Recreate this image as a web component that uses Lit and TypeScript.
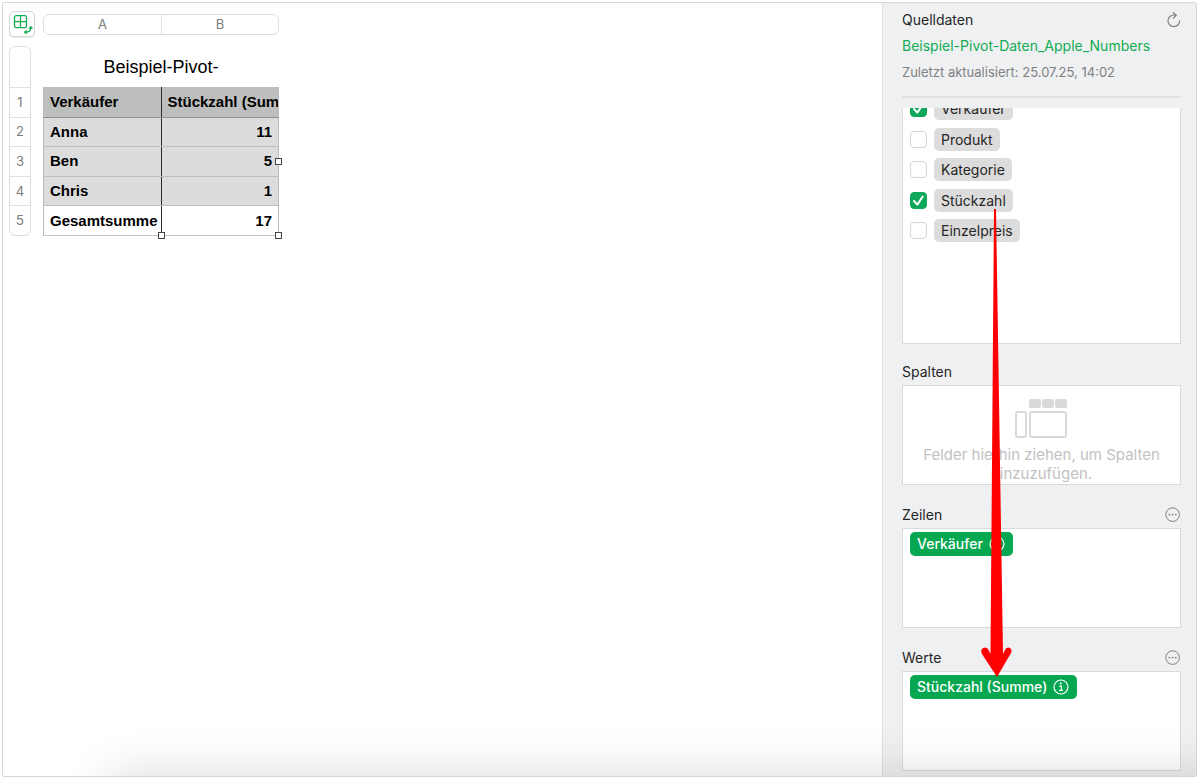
import { LitElement, html, css, svg, nothing } from "lit";
import { customElement, property, state } from "lit/decorators.js";

const infoIcon = html`<svg class="info" viewBox="0 0 16 16" width="16" height="16" aria-hidden="true">
  <circle cx="8" cy="8" r="7" fill="none" stroke="currentColor" stroke-width="1.2" />
  <circle cx="7.8" cy="4.6" r="1" fill="currentColor" />
  <path d="M6.3 7.2H8.3V11.2M6.1 11.4H10" fill="none" stroke="currentColor" stroke-width="1.2" />
</svg>`;

/** Spreadsheet area: headers, pivot table and selection handles. */
@customElement("pivot-sheet")
export class PivotSheet extends LitElement {
  static styles = css`
    :host {
      display: block;
      min-width: 0;
      font-family: "Liberation Sans", Arial, sans-serif;
    }
    .sheet {
      display: grid;
      grid-template-columns: 34px 236px;
      padding: 8px 0 0 6px;
    }
    .corner {
      width: 26px;
      height: 26px;
      padding: 0;
      border: 1px solid #d6d6d6;
      border-radius: 5px;
      background: #fff;
      box-shadow: 0 1px 1px rgba(0, 0, 0, 0.08);
    }
    .corner svg {
      display: block;
    }
    .cols {
      display: grid;
      grid-template-columns: 1fr 1fr;
      box-sizing: border-box;
      height: 21px;
      margin-top: 3px;
      border: 1px solid #dcdcdc;
      border-radius: 6px;
    }
    .cols,
    .rows {
      font: 13px/19px Inter, sans-serif;
      color: #7c7c7c;
      text-align: center;
    }
    .cols span + span {
      border-left: 1px solid #e2e2e2;
    }
    .rows {
      display: grid;
      grid-template-rows: 40px repeat(5, 1fr);
      box-sizing: border-box;
      width: 22px;
      height: 190px;
      margin-top: 9px;
      border: 1px solid #dcdcdc;
      border-radius: 6px;
    }
    .rows span {
      display: grid;
      place-items: center;
    }
    .rows span + span {
      border-top: 1px solid #e2e2e2;
    }
    .body {
      position: relative;
      margin-top: 9px;
    }
    table {
      width: 100%;
      height: 149px;
      table-layout: fixed;
      border-collapse: collapse;
      font-size: 15px;
      line-height: 20px;
      color: #000;
    }
    caption {
      box-sizing: border-box;
      height: 41px;
      padding-top: 11px;
      font-size: 18px;
    }
    tr {
      height: 20%;
    }
    th,
    td {
      padding: 4px 6px;
      overflow: hidden;
      white-space: nowrap;
      font-weight: bold;
      text-align: left;
      border: 1px solid #bebebe;
      background: #dcdcdc;
    }
    td {
      text-align: right;
    }
    .top th {
      background: #bdbfbe;
      border-color: #bdbfbe;
      border-bottom-color: #8f9190;
    }
    .total th,
    .total td {
      background: #fff;
      border-top-color: #7e7e7e;
      border-bottom-color: #c6c6c6;
    }
    tr > :first-child {
      border-right: 1px solid #2b2b2b;
    }
    tr > :last-child {
      border-left: 1px solid #2b2b2b;
    }
    .handle {
      position: absolute;
      width: 7px;
      height: 7px;
      box-sizing: border-box;
      border: 1px solid #444;
      background: #fff;
    }
    .bottom {
      bottom: -3px;
    }
    .center {
      left: calc(50% - 3px);
    }
    .right {
      right: -3px;
    }
    .middle {
      bottom: 71px;
    }
  `;

  @property({ attribute: false }) data: [string, number][] = [
    ["Anna", 11],
    ["Ben", 5],
    ["Chris", 1],
  ];

  render() {
    const total = this.data.reduce((sum, [, n]) => sum + n, 0);
    return html`<div class="sheet">
      <button class="corner" aria-label="Pivot-Tabelle">
        <svg width="24" height="24" viewBox="0 0 24 24" fill="none" stroke="#12ac53" stroke-width="1.3">
          <rect x="4.5" y="3.700" width="12" height="12" rx="1.8" />
          <path d="M10.500 3.700V15.700M4.500 9.700H16.500" />
          <path d="M20.700 16Q20.700 20 15.500 20.200" />
          <path d="M18.700 16.400L20.700 14L22.700 16.500ZM16.400 18.200L13.900 20.200L16.500 22.100Z" fill="#12ac53" stroke-width=".5" />
        </svg>
      </button>
      <div class="cols"><span>A</span><span>B</span></div>
      <div class="rows">
        <span></span>${[1, 2, 3, 4, 5].map((n) => html`<span>${n}</span>`)}
      </div>
      <div class="body">
        <table>
          <caption>Beispiel-Pivot-</caption>
          <tbody>
            <tr class="top"><th scope="col">Verkäufer</th><th scope="col">Stückzahl (Summe)</th></tr>
            ${this.data.map(([name, n]) => html`<tr><th scope="row">${name}</th><td>${n}</td></tr>`)}
            <tr class="total"><th scope="row">Gesamtsumme</th><td>${total}</td></tr>
          </tbody>
        </table>
        <i class="handle bottom center"></i>
        <i class="handle bottom right"></i>
        <i class="handle middle right"></i>
      </div>
    </div>`;
  }
}

/** Inspector with the field list and the three drop areas. */
@customElement("pivot-inspector")
export class PivotInspector extends LitElement {
  static styles = css`
    :host {
      display: block;
      box-sizing: border-box;
      padding: 7px 15px 5px 19px;
      border-left: 1px solid #e0e0e1;
      background: #eff0f2;
      font: 14px/20px Inter, sans-serif;
      color: #262626;
    }
    .head {
      display: flex;
      justify-content: space-between;
      align-items: center;
    }
    h2 {
      margin: 0;
      font: inherit;
    }
    button {
      display: block;
      padding: 0;
      border: 0;
      background: none;
      color: #808080;
    }
    button svg,
    .info {
      display: block;
    }
    .source {
      display: block;
      margin-top: 6px;
      color: #12ac53;
      text-decoration: none;
    }
    .updated {
      margin: 6px 0 0;
      padding-bottom: 14px;
      border-bottom: 2px solid #dfe0e2;
      font-size: 13px;
      color: #808082;
    }
    .box {
      box-sizing: border-box;
      height: 100px;
      border: 1px solid #d9dadb;
      background: #fff;
      overflow: hidden;
    }
    .fields {
      height: 236px;
      margin-top: 10px;
      border-top: 0;
    }
    ul {
      display: flex;
      flex-direction: column;
      justify-content: space-between;
      height: 145px;
      margin: -11px 0 0;
      padding: 0 0 0 7px;
      list-style: none;
    }
    label {
      display: flex;
      align-items: center;
      gap: 7px;
      width: max-content;
    }
    .check {
      display: grid;
      color: #fff;
    }
    .check > * {
      grid-area: 1 / 1;
    }
    input {
      appearance: none;
      width: 17px;
      height: 17px;
      margin: 0;
      box-sizing: border-box;
      border: 1px solid #d4d4d4;
      border-radius: 4px;
      background: #fff;
    }
    input:checked {
      border-color: #0fa75a;
      background: #0fa75a;
    }
    .check svg {
      pointer-events: none;
    }
    .chip {
      padding: 0 7px;
      border-radius: 5px;
      background: #dcdcdc;
      line-height: 23px;
    }
    .areas {
      display: grid;
      gap: 20px;
      margin-top: 18px;
    }
    .area .head {
      height: 20px;
      margin-bottom: 3px;
    }
    .empty {
      padding-top: 13px;
      text-align: center;
      font-size: 15px;
      line-height: 19px;
      color: #c2c2c2;
    }
    .empty svg {
      display: block;
      margin: 0 auto 6px;
    }
    .empty p {
      margin: 0 10px;
    }
    .pill {
      display: inline-flex;
      align-items: center;
      gap: 6px;
      height: 24px;
      margin: 3px 7px;
      padding: 0 8px 0 7px;
      border-radius: 5px;
      background: #05a850;
      color: #fff;
      font-weight: 500;
    }
  `;

  @state() private fields = [
    { name: "Verkäufer", on: true },
    { name: "Produkt", on: false },
    { name: "Kategorie", on: false },
    { name: "Stückzahl", on: true },
    { name: "Einzelpreis", on: false },
  ];

  private area(title: string, value?: string) {
    return html`<section class="area">
      <div class="head">
        <h2>${title}</h2>
        ${value
          ? html`<button aria-label="Optionen">
              <svg width="16" height="16" viewBox="0 0 16 16">
                <circle cx="7.600" cy="7.600" r="6.800" fill="none" stroke="currentColor" />
                ${[4.4, 7.6, 10.8].map((x) => svg`<circle cx=${x} cy="7.600" r=".9" fill="currentColor" />`)}
              </svg>
            </button>`
          : nothing}
      </div>
      <div class="box">
        ${value
          ? html`<div class="pill">${value}${infoIcon}</div>`
          : html`<div class="empty">
              <svg width="54" height="40" viewBox="0 0 54 40" fill="#d9d9d9">
                <rect x="14" y="0" width="12" height="9" rx="2" />
                <rect x="27" y="0" width="12" height="9" rx="2" />
                <rect x="40" y="0" width="12" height="9" rx="2" />
                <rect x="1" y="13" width="10" height="25" rx="2" fill="none" stroke="#d9d9d9" stroke-width="2" />
                <rect x="15" y="13" width="36" height="25" rx="2" fill="none" stroke="#d9d9d9" stroke-width="2" />
              </svg>
              <p>Felder hierhin ziehen, um Spalten hinzuzufügen.</p>
            </div>`}
      </div>
    </section>`;
  }

  render() {
    return html`
      <div class="head">
        <h2>Quelldaten</h2>
        <button aria-label="Aktualisieren">
          <svg width="14" height="18" viewBox="0 0 14 18" fill="none" stroke="currentColor" stroke-width="1.2">
            <path d="M12.600 9.500A5.800 5.800 0 1 1 6.800 4Q8 4 9 4.300" />
            <path d="M6 1.200L9.200 4.300L6 7.500" />
          </svg>
        </button>
      </div>
      <a class="source" href="#">Beispiel-Pivot-Daten_Apple_Numbers</a>
      <p class="updated">Zuletzt aktualisiert: 25.07.25, 14:02</p>
      <div class="box fields">
        <ul>
          ${this.fields.map(
            (f) => html`<li>
              <label>
                <span class="check">
                  <input type="checkbox" .checked=${f.on} />
                  ${f.on
                    ? html`<svg width="17" height="17" viewBox="0 0 17 17">
                        <path d="M4 9L7.300 12.600L12.800 4.500" fill="none" stroke="#fff" stroke-width="2" stroke-linecap="round" stroke-linejoin="round" />
                      </svg>`
                    : nothing}
                </span>
                <span class="chip">${f.name}</span>
              </label>
            </li>`
          )}
        </ul>
      </div>
      <div class="areas">
        ${this.area("Spalten")} ${this.area("Zeilen", "Verkäufer")} ${this.area("Werte", "Stückzahl (Summe)")}
      </div>
    `;
  }
}

@customElement("app-root")
export class AppRoot extends LitElement {
  static styles = css`
    :host {
      display: flex;
      box-sizing: border-box;
      min-height: 100vh;
      padding: 2px;
      background: #fff;
    }
    .window {
      position: relative;
      flex: 1;
      display: grid;
      grid-template-columns: minmax(0, 1fr) 314px;
      border: 1px solid #d6d6d7;
      border-radius: 2px;
      overflow: hidden;
    }
    /* Soft shade that rises from the lower edge. */
    .shade {
      position: absolute;
      top: 100%;
      left: 110px;
      right: -60px;
      height: 60px;
      box-shadow: 0 0 50px rgba(0, 0, 0, 0.16);
      pointer-events: none;
    }
    /* Annotation arrow from the field list to the values area. */
    .arrow {
      position: absolute;
      top: 205px;
      right: 184px;
      pointer-events: none;
    }
  `;

  render() {
    return html`<div class="window">
      <pivot-sheet></pivot-sheet>
      <pivot-inspector></pivot-inspector>
      <div class="shade"></div>
      <svg class="arrow" width="33" height="470" viewBox="0 0 33 470" fill="#fe0000" aria-hidden="true">
        <path d="M15 1H17L24 446L26.500 441Q28.500 438.500 31 440Q33.500 442 32 445L18 469L3 446Q1 442 4 440Q7 438.500 9 441L11.500 446Z" />
      </svg>
    </div>`;
  }
}
